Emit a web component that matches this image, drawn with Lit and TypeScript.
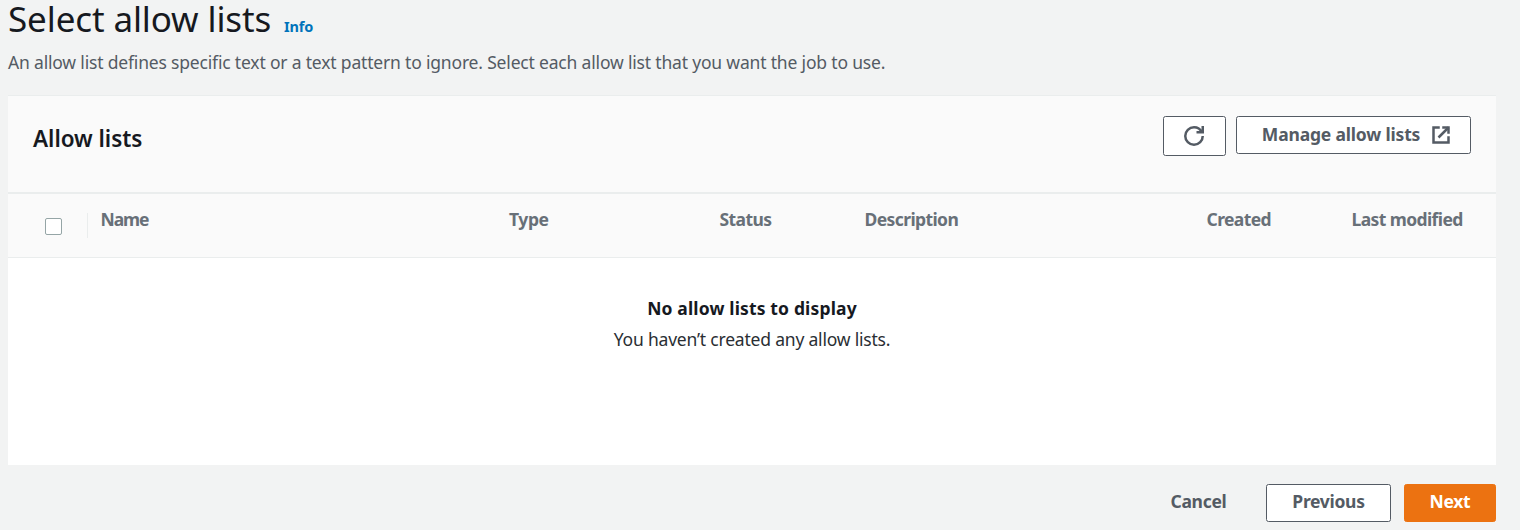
import { LitElement, html, css } from "lit";
import { customElement } from "lit/decorators.js";

@customElement("app-root")
export class AppRoot extends LitElement {
  static styles = css`
    :host {
      display: block;
      box-sizing: border-box;
      height: 530px;
      padding: 0 24px 0 8px;
      background: #f2f3f3;
      color: #16191f;
      font: 400 17.5px/27px "Noto Sans", "Open Sans", sans-serif;
    }
    * { box-sizing: border-box; }
    h1, h2, p { margin: 0; font-weight: 400; }
    .title { display: flex; align-items: baseline; height: 43px; gap: 13px; white-space: nowrap; }
    .title h1 { font-size: 35px; line-height: 38px; letter-spacing: -0.12px; }
    .info { color: #0073bb; font-size: 14.5px; font-weight: 700; letter-spacing: -0.2px; }
    .intro { height: 52px; padding-top: 6px; color: #545b64; letter-spacing: -0.18px; white-space: nowrap; }
    .panel { height: 370px; background: #fff; border-top: 1px solid #eaeded; }
    .head { display: flex; justify-content: space-between; height: 96px; padding: 20px 25px 0; background: #fafafa; }
    .head h2 { padding-top: 6px; font-size: 22.5px; line-height: 34px; font-weight: 600; letter-spacing: -0.05px; }
    .actions { display: flex; align-items: flex-start; gap: 10px; }
    .btn {
      display: flex; align-items: center; justify-content: center;
      height: 38px; padding: 0 0 2px; border: 1px solid #545b64; border-radius: 2.5px;
      background: #fff; color: #545b64; font: 700 17.5px/27px "Noto Sans", "Open Sans", sans-serif;
      letter-spacing: -0.3px; white-space: nowrap;
    }
    .refresh { width: 63px; height: 40px; padding: 0 2px 0 0; }
    .manage { width: 235px; gap: 11px; padding-left: 6px; letter-spacing: -0.18px; }
    .manage svg { margin-top: 1px; }
    svg { display: block; width: 20px; height: 20px; overflow: visible; fill: none; stroke: currentColor; stroke-width: 2; }
    .columns {
      display: grid;
      grid-template-columns: 80px 408px 211px 145px 342px 145px 1fr;
      height: 66px; padding-top: 12px; border-top: 2px solid #eaeded; border-bottom: 1px solid #eaeded;
      background: #fafafa; color: #687078; font-weight: 700; white-space: nowrap;
    }
    .columns span { padding-left: 12.5px; letter-spacing: -0.6px; }
    .columns .name { letter-spacing: -1.1px; }
    .columns .type { letter-spacing: -0.4px; padding-left: 13px; }
    .select { display: flex; height: 25px; margin-top: 7px; padding: 5px 0 0 37px; border-right: 1px solid #eaeded; }
    .box { width: 17px; height: 17px; border: 1px solid #95a5a6; border-radius: 2px; background: #fff; }
    .empty { padding-top: 35px; text-align: center; line-height: 31px; }
    .empty strong { display: block; font-weight: 700; letter-spacing: 0.15px; }
    .empty p { color: #2a2e33; letter-spacing: -0.2px; }
    .footer { display: flex; align-items: center; justify-content: flex-end; padding-top: 19px; }
    .footer .btn { padding-bottom: 3px; }
    .footer .cancel { width: 95px; border: 0; background: none; margin-right: 20px; }
    .previous { width: 125px; margin-right: 13px; }
    .footer .next { width: 92px; border-color: #ec7211; background: #ec7211; color: #fff; }
  `;

  render() {
    return html`
      <div class="title"><h1>Select allow lists</h1><span class="info">Info</span></div>
      <p class="intro">An allow list defines specific text or a text pattern to ignore. Select each allow list that you want the job to use.</p>
      <section class="panel">
        <div class="head">
          <h2>Allow lists</h2>
          <div class="actions">
            <button class="btn refresh" aria-label="Refresh">
              <svg viewBox="0 0 16 16"><path d="M15 8c0 3.87-3.13 7-7 7s-7-3.13-7-7 3.13-7 7-7c2.79 0 5.2 1.63 6.33 4"/><path d="M15 0v5h-5"/></svg>
            </button>
            <button class="btn manage"><span>Manage allow lists</span>
              <svg viewBox="0 0 16 16"><path d="M14 9v5H2V2h5"/><path d="M9 2h5v5"/><path d="M6 10l8-8"/></svg>
            </button>
          </div>
        </div>
        <div class="columns">
          <div class="select"><i class="box"></i></div>
          <span class="name">Name</span><span class="type">Type</span><span>Status</span><span>Description</span><span>Created</span><span>Last modified</span>
        </div>
        <div class="empty"><strong>No allow lists to display</strong><p>You haven’t created any allow lists.</p></div>
      </section>
      <div class="footer">
        <button class="btn cancel">Cancel</button>
        <button class="btn previous">Previous</button>
        <button class="btn next">Next</button>
      </div>
    `;
  }
}
